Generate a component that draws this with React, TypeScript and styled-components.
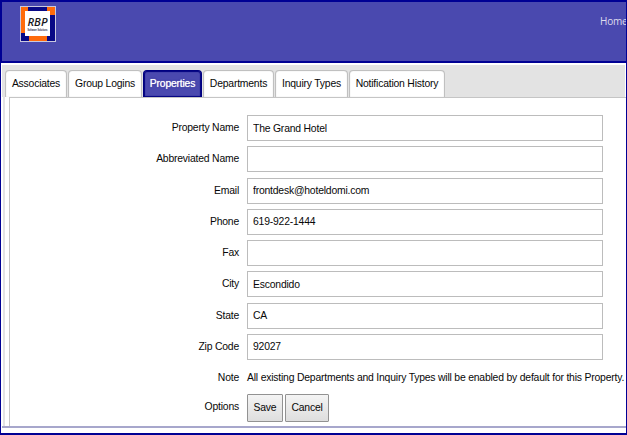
import React from "react";
import styled, { createGlobalStyle } from "styled-components";

const GlobalStyle = createGlobalStyle`
  * { box-sizing: border-box; }
  html, body { margin: 0; overflow: hidden; background: #fff; }
`;

const Page = styled.div`
  display: flex;
  flex-direction: column;
  width: 627px;
  height: 435px;
  overflow: hidden;
  padding-bottom: 5px;
  border: solid #000094;
  border-width: 1px 1px 2px;
  background: #fff;
  color: #080808;
  font: 10.4px/14px "Liberation Sans", Arial, sans-serif;
  letter-spacing: -0.2px;
`;

const Header = styled.header`
  display: flex;
  flex: 0 0 62px;
  justify-content: space-between;
  align-items: flex-start;
  padding: 4px 0 0 18px;
  background: #4a49af;
  border: solid #000094;
  border-width: 1px 0 2px 1px;
  overflow: hidden;
`;

const HomeLink = styled.a`
  width: 26px;
  margin-top: 8px;
  overflow: hidden;
  color: #dedced;
  font: 10px/14px "Open Sans", sans-serif;
  letter-spacing: -0.2px;
  white-space: nowrap;
`;

const Content = styled.main`
  display: flex;
  flex: 1;
  flex-direction: column;
  min-height: 0;
  margin-left: 1px;
  padding-top: 2px;
  border-bottom: 2px solid #a7a7cc;
`;

const TabBar = styled.nav`
  display: flex;
  flex: 0 0 32px;
  gap: 1px;
  align-items: flex-end;
  padding-left: 3px;
  margin-right: 1px;
  background: #e3e3e3;
`;

const Tab = styled.button<{ $width: number; $active?: boolean }>`
  width: ${({ $width }) => $width}px;
  height: 27px;
  padding: 0;
  border: 1px solid ${({ $active }) => ($active ? "#000080" : "#c0c0c0")};
  border-bottom: 0;
  border-radius: 4px 4px 0 0;
  background: ${({ $active }) => ($active ? "#4a49af" : "#fff")};
  color: ${({ $active }) => ($active ? "#fff" : "#080808")};
  font: inherit;
  letter-spacing: inherit;
  white-space: nowrap;
  text-shadow: ${({ $active }) => ($active ? "0 0 1px #fff, 0 0 2px #000080" : "none")};
  box-shadow: inset ${({ $active }) => ($active ? "0 0 1px 1px #000080" : "0 0 1px #c0c0c0")};
`;

const Panel = styled.section`
  flex: 1;
  min-height: 0;
  margin-left: 1px;
  border-left: 2px solid #e3e3e3;
  padding-left: 4px;
`;

const Form = styled.form`
  height: 100%;
  padding-top: 17px;
  border: solid #c5c5c5;
  border-width: 1px 0 0 1px;
`;

const Row = styled.div<{ $height?: number }>`
  display: grid;
  grid-template-columns: 229px 1fr;
  column-gap: 8px;
  height: ${({ $height = 31.25 }) => $height}px;
`;

const Label = styled.label`
  padding-top: 6px;
  text-align: right;
`;

const Field = styled.input`
  width: 356px;
  height: 26px;
  padding: 0 5px;
  border: 1px solid #bcbcbc;
  border-radius: 0;
  outline: 0;
  background: #fff;
  color: #080808;
  font: inherit;
  letter-spacing: inherit;
`;

const Note = styled.div`
  padding-top: 6px;
  white-space: nowrap;
`;

const Actions = styled.div`
  display: flex;
  gap: 2px;
`;

const Button = styled.button<{ $width: number }>`
  width: ${({ $width }) => $width}px;
  height: 28px;
  padding: 0;
  border: 1px solid #929292;
  border-radius: 1px;
  background: linear-gradient(#f4f4f4, #dedede);
  color: #080808;
  font: inherit;
  letter-spacing: inherit;
`;

const Logo = () => (
  <svg width="36" height="36" viewBox="0 0 36 36" aria-label="RBP Software Solutions">
    <path fill="#c9c8df" d="M0 0h36v36H0z" />
    <path fill="#ff6b0b" d="M1 1h34v34H1z" />
    <path fill="#090986" d="M8 1h19v8h8v26h-8v-6h-2V9H8zM1 27h8v8H1z" />
    <path fill="#fff" d="M5 5h25v25H5z" />
    <text x="7.5" y="19.8" fill="#171721" fontFamily="Open Sans, sans-serif" fontSize="11.5" fontWeight="600" fontStyle="italic" letterSpacing="0" textLength="20" lengthAdjust="spacingAndGlyphs">RBP</text>
    <text x="7.5" y="24.8" fill="#252545" fontFamily="Liberation Sans, sans-serif" fontSize="2.8" fontWeight="700" letterSpacing="0" textLength="20" lengthAdjust="spacingAndGlyphs">Software Solutions</text>
  </svg>
);

const tabs = [
  { name: "Associates", width: 62 },
  { name: "Group Logins", width: 74 },
  { name: "Properties", width: 59, active: true },
  { name: "Departments", width: 71 },
  { name: "Inquiry Types", width: 73 },
  { name: "Notification History", width: 96 },
];

const fields = [
  ["Property Name", "The Grand Hotel"],
  ["Abbreviated Name", ""],
  ["Email", "frontdesk@hoteldomi.com"],
  ["Phone", "619-922-1444"],
  ["Fax", ""],
  ["City", "Escondido"],
  ["State", "CA"],
  ["Zip Code", "92027"],
];

export default function App() {
  return (
    <>
      <GlobalStyle />
      <Page>
        <Header>
          <Logo />
          <HomeLink>Home</HomeLink>
        </Header>
        <Content>
          <TabBar>
            {tabs.map((tab) => (
              <Tab key={tab.name} $width={tab.width} $active={tab.active}>{tab.name}</Tab>
            ))}
          </TabBar>
          <Panel>
            <Form onSubmit={(event) => event.preventDefault()}>
              {fields.map(([label, value]) => (
                <Row key={label}>
                  <Label htmlFor={label}>{label}</Label>
                  <Field id={label} defaultValue={value} />
                </Row>
              ))}
              <Row $height={29}>
                <Label>Note</Label>
                <Note>All existing Departments and Inquiry Types will be enabled by default for this Property.</Note>
              </Row>
              <Row>
                <Label>Options</Label>
                <Actions>
                  <Button type="submit" $width={36}>Save</Button>
                  <Button type="button" $width={44}>Cancel</Button>
                </Actions>
              </Row>
            </Form>
          </Panel>
        </Content>
      </Page>
    </>
  );
}
